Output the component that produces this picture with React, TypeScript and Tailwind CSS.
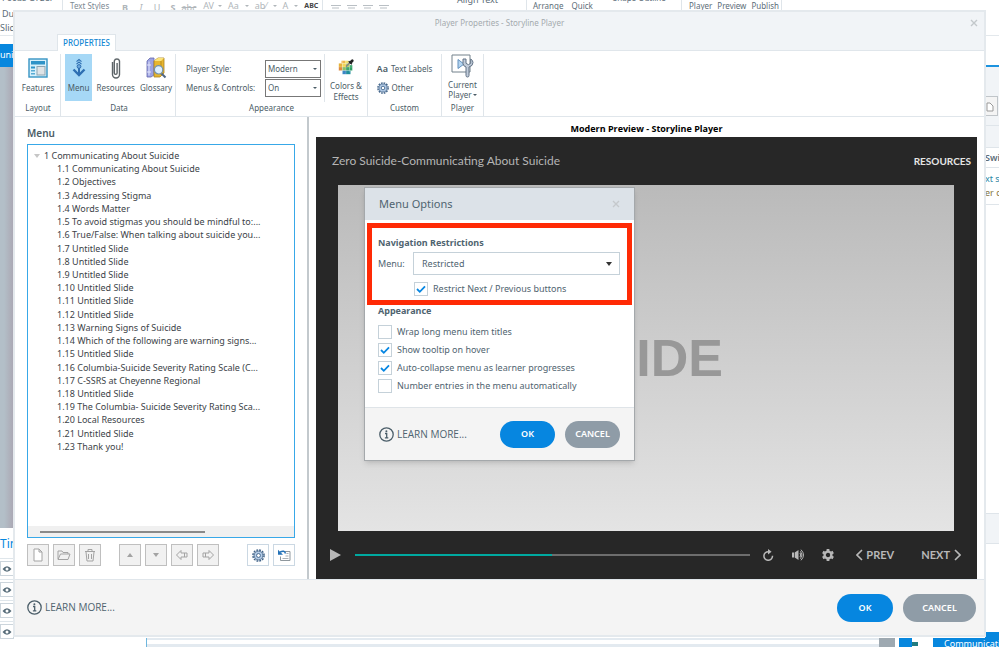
import type { ReactNode } from "react";

const menuItems = [
  "1.1 Communicating About Suicide",
  "1.2 Objectives",
  "1.3 Addressing Stigma",
  "1.4 Words Matter",
  "1.5 To avoid stigmas you should be mindful to:...",
  "1.6 True/False: When talking about suicide you...",
  "1.7 Untitled Slide",
  "1.8 Untitled Slide",
  "1.9 Untitled Slide",
  "1.10 Untitled Slide",
  "1.11 Untitled Slide",
  "1.12 Untitled Slide",
  "1.13 Warning Signs of Suicide",
  "1.14 Which of the following are warning signs...",
  "1.15 Untitled Slide",
  "1.16 Columbia-Suicide Severity Rating Scale (C...",
  "1.17 C-SSRS at Cheyenne Regional",
  "1.18 Untitled Slide",
  "1.19 The Columbia- Suicide Severity Rating Sca...",
  "1.20 Local Resources",
  "1.21 Untitled Slide",
  "1.23 Thank you!",
];

/* ---------- icons ---------- */

function GearIcon({ className }: { className: string }) {
  return (
    <svg viewBox="0 0 14 14" className={className} fill="none" stroke="#3f6288">
      <circle cx="7" cy="7" r="6" strokeWidth="1.6" strokeDasharray="2 1.14" />
      <circle cx="7" cy="7" r="4.7" fill="#b5cde8" strokeWidth="0.9" />
      <circle cx="7" cy="7" r="2.1" fill="#fff" strokeWidth="1" />
    </svg>
  );
}

function InfoIcon() {
  return (
    <svg viewBox="0 0 15 15" className="size-[15px]" fill="none" stroke="#4b5e69">
      <circle cx="7.5" cy="7.5" r="6.7" strokeWidth="1.3" />
      <path d="M6 6.5h1.7v4.2M5.9 10.8h3.4" strokeWidth="1.3" />
      <circle cx="7.4" cy="4.2" r="1" fill="#4b5e69" stroke="none" />
    </svg>
  );
}

function FeaturesIcon() {
  return (
    <svg viewBox="0 0 20 20" className="size-5">
      <rect x="1" y="1" width="18" height="18" fill="#d9f0fb" stroke="#3794c4" strokeWidth="1.4" />
      <rect x="3" y="3" width="14" height="3.5" fill="#2f93c8" />
      <rect x="3" y="8.5" width="4" height="2" fill="#2f93c8" />
      <rect x="3" y="12" width="4" height="1.5" fill="#58abd3" />
      <rect x="3" y="15" width="4" height="1.5" fill="#58abd3" />
      <rect x="9" y="8.5" width="8" height="8.5" fill="#dfe3e6" stroke="#8fa5b2" />
    </svg>
  );
}

function MenuIcon() {
  return (
    <svg viewBox="0 0 20 20" className="size-5" fill="none" stroke="#2e6fb2">
      <path d="M7.5 3.7 10 1.5l2.5 2.2M7.5 6.2 10 4l2.5 2.2" strokeWidth="1.1" />
      <circle cx="10" cy="8.5" r="1.9" fill="#6ea7dc" />
      <path d="M10 10v6" strokeWidth="2" />
      <path d="m4.5 11.5 5.500 5.500 5.500-5.500" strokeWidth="2.4" />
    </svg>
  );
}

function ClipIcon() {
  return (
    <svg viewBox="0 0 20 22" className="h-[22px] w-5" fill="none" stroke="#5d6468" strokeWidth="1.4">
      <path d="M6.5 5v12.5a3.5 3.5 0 0 0 7 0V4a2.7 2.7 0 0 0-5.2 0v12a1.4 1.4 0 0 0 2.8 0V6" />
    </svg>
  );
}

function GlossaryIcon() {
  return (
    <svg viewBox="0 0 22 22" className="size-[22px]">
      <path d="m2 4 3-3h4v17l-3 2H2z" fill="#9ca2e2" stroke="#6468ad" strokeWidth="0.8" />
      <path d="M4 4.5v14M2 8h4M2 15h4" stroke="#e3e5fb" />
      <path d="m9 4 4-3h6v15l-4 4H9z" fill="#e7b62f" stroke="#a88125" strokeWidth="0.8" />
      <path d="m9 4 4-3h6l-3 3z" fill="#fae37c" />
      <path d="M16 4v14" stroke="#b98b1f" />
      <path d="m16.5 16.5 4 4" stroke="#4f6584" strokeWidth="2" />
      <circle cx="13.6" cy="12.8" r="4.2" fill="#dcefff" stroke="#7290aa" strokeWidth="1.2" />
    </svg>
  );
}

function ColorsIcon() {
  return (
    <svg viewBox="0 0 20 20" className="size-5">
      <path d="M5 3h4v3H5z" fill="#f0b64a" />
      <path d="M9 3h4v3H9z" fill="#f4df69" />
      <path d="M2 6h4v4H2z" fill="#e6b33b" />
      <path d="M6 6h4v4H6z" fill="#f2d65a" />
      <path d="M10 6h4v4h-4z" fill="#b5cf5c" />
      <path d="M2 10h4v4H2z" fill="#de8a3f" />
      <path d="M6 10h4v4H6z" fill="#8fc06a" />
      <path d="M10 10h4v4h-4z" fill="#3fa66d" />
      <path d="M14 8h3v6h-3z" fill="#2c9f63" />
      <path d="M6 14h4v4H6z" fill="#3c86c5" />
      <path d="M10 14h5v4h-5z" fill="#1f8f9c" />
      <path d="M2 10h15M2 14h15M5 6h9M6 3v15M10 3v15M14 8v8" stroke="#fff" strokeWidth="0.4" opacity="0.6" />
      <path d="m10.5 9 4-4" stroke="#888" strokeWidth="1.8" strokeLinecap="round" />
      <path d="m13 3.5 3.5 3.5" stroke="#222" strokeWidth="1.5" />
      <path d="m15.3 4.7 1.7-1.7" stroke="#222" strokeWidth="3" strokeLinecap="round" />
    </svg>
  );
}

function WrenchIcon() {
  return (
    <svg viewBox="0 0 24 24" className="size-6">
      <path d="M2 1h18v17H2z" fill="#fff" stroke="#72818b" />
      <path d="M8 5.5v9l6-4.5z" fill="#b5d5f0" stroke="#6290bd" />
      <path d="M13 5v4.5q0 2.5 3 3.5v8.5q0 1.5 1.5 1.5t1.5-1.5V13q4-1 4-4.500-.2-2.500-2.300-3.500v4.300l-2.300 1.400-2.400-1.400V5z" fill="#c1ccda" stroke="#637386" />
    </svg>
  );
}

function EyeIcon() {
  return (
    <svg viewBox="0 0 10 8" className="h-2 w-2.5">
      <path d="M.5 4Q5-1.5 9.5 4 5 9.5.5 4z" fill="#566b78" />
      <circle cx="5" cy="4" r="1.5" fill="#fff" />
    </svg>
  );
}

function CloseIcon({ className }: { className: string }) {
  return (
    <svg viewBox="0 0 8 8" className={className} fill="none" stroke="currentColor" strokeWidth="1.4">
      <path d="m1 1 6 6M7 1 1 7" />
    </svg>
  );
}

function Caret() {
  return (
    <svg viewBox="0 0 4 2" className="h-0.5 w-1" fill="currentColor">
      <path d="M0 0h4L2 2z" />
    </svg>
  );
}

/* ---------- shared controls ---------- */

function Check({ label, checked }: { label: string; checked?: boolean }) {
  return (
    <label className="flex h-[18px] items-center gap-[5px] text-[9px] text-[#4f6470]">
      <span className="relative size-[14px]">
        <input type="checkbox" defaultChecked={checked} className="peer block size-[14px] appearance-none border border-[#c5d1d9] bg-white" />
        <svg viewBox="0 0 14 14" className="pointer-events-none absolute inset-0 hidden size-[14px] peer-checked:block" fill="none" stroke="#0686e2" strokeWidth="1.8">
          <path d="m3 7 2.8 2.8L11 4.4" />
        </svg>
      </span>
      {label}
    </label>
  );
}

function LearnMore() {
  return (
    <a href="#learn" className="flex items-center gap-[3px] font-['Open_Sans',sans-serif] text-[10px] text-[#4f6470]">
      <InfoIcon />
      LEARN MORE...
    </a>
  );
}

function RibbonSelect({ id, value }: { id: string; value: string }) {
  return (
    <span className="relative">
      <select id={id} className="block h-[18px] w-14 appearance-none border border-[#777] bg-white pl-0.5 text-[8px] text-[#4b5c66]">
        <option>{value}</option>
      </select>
      <span className="pointer-events-none absolute top-2 right-1">
        <Caret />
      </span>
    </span>
  );
}

function RibbonButton({ icon, label, active }: { icon: ReactNode; label: string; active?: boolean }) {
  return (
    <button className={`flex h-[47px] flex-col items-center pt-0.5 ${active ? "bg-[#a6d8f6] px-[3px]" : "px-px"}`}>
      <span className="flex h-6 items-center">{icon}</span>
      <span className="mt-0.5 leading-3">{label}</span>
    </button>
  );
}

function Group({ name, className, children }: { name: string; className: string; children: ReactNode }) {
  return (
    <div className={`flex flex-col border-r border-[#dfe5ea] ${className}`}>
      <div className="flex h-[48px] justify-center gap-[3px]">{children}</div>
      <div className="text-center leading-3">{name}</div>
    </div>
  );
}

function ToolButton({ children, label, enabled }: { children: ReactNode; label: string; enabled?: boolean }) {
  return (
    <button
      aria-label={label}
      className={`flex size-[22px] items-center justify-center border ${enabled ? "border-[#cbd8e3] bg-white" : "border-[#bfbfbf] bg-[#f1f1f1]"}`}
    >
      <svg viewBox="0 0 14 14" className="size-[14px]" fill="none" stroke="#a3a3a3">
        {children}
      </svg>
    </button>
  );
}

/* ---------- editor window behind the dialog ---------- */

function EditorBackdrop() {
  return (
    <div className="flex h-full flex-col text-[9px] text-[#5c6d78]">
      <div className="flex h-[36px] border-b border-[#e3e8ec] leading-3">
        <div className="w-[63px] flex-none border-r border-[#dfe5ea]">
          <div className="-mt-2 pl-0.5">Focus Order</div>
          <div className="mt-1 pl-0.5">Du</div>
          <div className="mt-0.5">Slid</div>
        </div>
        <div className="flex h-3 w-[260px] flex-none items-center border-r border-[#dfe5ea] pl-[7px] text-[#b0b6ba]">
          <span className="w-[47px] text-[8px] text-[#7d8992]">Text Styles</span>
          <span className="flex pt-1 text-center">
            <b className="w-4">B</b>
            <i className="w-4">I</i>
            <u className="w-4">U</u>
            <b className="w-4">S</b>
            <s className="w-4">abc</s>
          </span>
          <span className="w-[17px] text-right">AV</span>
          <span className="flex items-center gap-[6px] pl-1">
            <Caret />
            <span>Aa</span>
            <Caret />
            <span>ab⁄</span>
            <Caret />
            <span>A</span>
            <Caret />
            <b className="text-[7px] text-[#444]">ABC</b>
          </span>
        </div>
        <div className="flex h-3 w-[204px] flex-none items-center gap-[6px] border-r border-[#dfe5ea] pt-1 pl-2">
          {[0, 1, 2, 3].map((i) => (
            <svg key={i} viewBox="0 0 10 6" className="h-[6px] w-2.5" stroke="#b9bfc4">
              <path d="M0 .5h10M1 3h7M0 5.5h10" />
            </svg>
          ))}
          <span className="-mt-4 ml-[62px]">Align Text</span>
        </div>
        <div className="flex h-3 flex-1 gap-2 border-r border-[#dfe5ea] pl-[6px] text-[8px]">
          <span>Arrange</span>
          <span>Quick</span>
          <span className="-mt-2 pl-3">Shape Outline</span>
        </div>
        <div className="flex h-3 w-[100px] flex-none gap-[5px] border-r border-[#dfe5ea] pl-[7px] text-[8px]">
          <span>Player</span>
          <span>Preview</span>
          <span>Publish</span>
        </div>
        <div className="w-[217px] flex-none" />
      </div>

      <div className="flex min-h-0 flex-1 justify-between">
        <div className="-mb-1 flex w-[14px] flex-col overflow-hidden">
          <div className="mt-2 h-[23px] flex-none bg-[#0787de] leading-[22px] text-white">unic</div>
          <div className="flex-1 bg-linear-to-r from-[#b3bfc8] from-30% to-[#aaa6b2]" />
          <div className="h-[30px] flex-none text-xs leading-[32px] text-[#0787de]">Tin</div>
          {[0, 1, 2, 3].map((i) => (
            <div key={i} className="h-[21px] flex-none border-t border-[#dfe6eb] pt-0.5">
              <div className="flex h-[15px] items-center border border-[#ccd5dc] pl-px">
                <EyeIcon />
              </div>
            </div>
          ))}
        </div>
        <div className="flex w-[14px] flex-col overflow-hidden whitespace-nowrap">
          <div className="mt-[29px] h-[60px] flex-none border-t-2 border-[#1c93df] bg-[#f1f4f7] pt-[29px]">
            <button aria-label="Copy" className="flex h-5 w-[13px] items-center border border-[#c0c5c9] bg-[#f4f4f4]">
              <svg viewBox="0 0 8 12" className="h-3 w-2" fill="#fff" stroke="#999">
                <path d="M1 3h3l3 3v5H1z" />
              </svg>
            </button>
          </div>
          <div className="h-[23px] flex-none border-y border-[#dfe5ea] bg-[#f1f4f7]" />
          <div className="h-5 flex-none border-b border-[#dfe5ea] leading-5 font-semibold">Swip</div>
          <div className="h-[37px] flex-none border-b border-[#dfe5ea] pt-1 leading-[14px]">
            <div className="text-[#2b87a5]">xt sli</div>
            <div className="text-[#84763f]">er clic</div>
          </div>
          <div className="flex-1" />
          <div className="h-[31px] flex-none border-y border-[#dfe5ea] bg-[#f1f4f7]" />
          <div className="h-[88px] flex-none" />
          <div className="h-[6px] flex-none bg-[#0787de]" />
        </div>
      </div>

      <div className="flex h-[9px] overflow-hidden">
        <div className="w-[146px]" />
        <div className="flex flex-1 flex-col gap-[3px] border-l border-[#6fb7de] bg-[#e3eaf0] pt-0.5">
          <div className="h-1 bg-white" />
        </div>
        <div className="w-4 bg-[#9ea9b1]" />
        <div className="flex w-[104px] gap-[11px] border-l-4 border-white bg-[#0787de] pl-[13px] text-white">
          <span className="h-[9px] w-[21px] flex-none bg-white pt-1">
            <span className="block h-1 w-1.5 bg-[#227c80]" />
          </span>
          <span className="leading-3">Communicating</span>
        </div>
      </div>
    </div>
  );
}

/* ---------- dialog parts ---------- */

function Ribbon() {
  return (
    <div className="flex h-[66px] flex-none border-b border-[#e0e6eb] pt-[3px] text-[8px] text-[#4b5c66]">
      <Group name="Layout" className="w-[46px] pl-px">
        <RibbonButton icon={<FeaturesIcon />} label="Features" />
      </Group>
      <Group name="Data" className="w-[115px] pl-0.5">
        <RibbonButton icon={<MenuIcon />} label="Menu" active />
        <RibbonButton icon={<ClipIcon />} label="Resources" />
        <RibbonButton icon={<GlossaryIcon />} label="Glossary" />
      </Group>
      <Group name="Appearance" className="w-[192px]">
        <div className="flex flex-1 flex-col gap-px border-r border-[#dfe5ea] pt-[6px] pr-[3px] pl-2.5">
          <div className="flex items-center justify-between">
            <label htmlFor="style">Player Style:</label>
            <RibbonSelect id="style" value="Modern" />
          </div>
          <div className="flex items-center justify-between">
            <label htmlFor="controls">Menus &amp; Controls:</label>
            <RibbonSelect id="controls" value="On" />
          </div>
        </div>
        <button className="flex w-[39px] flex-col items-center pt-1 pr-[3px] leading-[11px]">
          <ColorsIcon />
          <span className="mt-1 whitespace-nowrap">Colors &amp;</span>
          <span>Effects</span>
        </button>
      </Group>
      <Group name="Custom" className="w-[74px]">
        <div className="flex flex-col gap-[5px] pt-2">
          <button className="flex h-[14px] items-center gap-[3px]">
            <span className="text-[9px] font-semibold">Aa</span>Text Labels
          </button>
          <button className="flex h-[14px] items-center gap-[3px]">
            <GearIcon className="size-3" />
            Other
          </button>
        </div>
      </Group>
      <Group name="Player" className="w-[42px]">
        <button className="flex flex-col items-center leading-[10px]">
          <WrenchIcon />
          <span className="mt-0.5">Current</span>
          <span className="flex items-center gap-px">
            Player
            <Caret />
          </span>
        </button>
      </Group>
    </div>
  );
}

function MenuPanel() {
  return (
    <div className="flex w-[294px] flex-none flex-col border-r-2 border-[#c3c9cd] pt-[9px] pr-3 pb-[13px] pl-3">
      <h2 className="pb-1 text-[10px] leading-[14px] font-semibold text-[#4b5c66]">Menu</h2>
      <div className="flex flex-1 flex-col justify-between border border-[#38a8e8] text-[9px] text-[#3c4348]">
        <ul className="grid h-[308px] content-between pt-1 pl-[29px] leading-[13px] whitespace-nowrap">
          <li className="-ml-[23px] flex items-center gap-1">
            <svg viewBox="0 0 6 4" className="h-1 w-1.5">
              <path d="M0 0h6L3 4z" fill="#c6c6c6" />
            </svg>
            1 Communicating About Suicide
          </li>
          {menuItems.map((item) => (
            <li key={item}>{item}</li>
          ))}
        </ul>
        <div className="flex h-[11px] items-center bg-[#f0f0f0] pl-3">
          <div className="h-0.5 w-[165px] bg-[#8a8a8a]" />
        </div>
      </div>
      <div className="mt-[6px] flex gap-1">
        <ToolButton label="New">
          <path d="M3 1h5l3 3v9H3zM8 1v3h3" fill="#fff" />
        </ToolButton>
        <ToolButton label="Open">
          <path d="M1 11V3h4l1 1.5h5V6M1 11.5 3.5 6H13l-2 5.5z" />
        </ToolButton>
        <ToolButton label="Delete">
          <path d="M2 3.5h10M5 3V1.5h4V3M3 4l1 9h6l1-9M5.5 6v5M8.5 6v5" />
        </ToolButton>
        <span className="w-2.5" />
        <ToolButton label="Move up">
          <path d="m4 9 3-4 3 4z" fill="#a3a3a3" stroke="none" />
        </ToolButton>
        <ToolButton label="Move down">
          <path d="m4 5 3 4 3-4z" fill="#a3a3a3" stroke="none" />
        </ToolButton>
        <ToolButton label="Promote">
          <path d="M1.5 7 6 2.5V5h6v4H6v2.5zM9.500 5v4" />
        </ToolButton>
        <ToolButton label="Demote">
          <path d="M12.5 7 8 2.5V5H2v4h6v2.5zM4.500 5v4" />
        </ToolButton>
        <span className="flex-1" />
        <button aria-label="Options" className="flex size-[22px] items-center justify-center border border-[#cbd8e3]">
          <GearIcon className="size-[13px]" />
        </button>
        <ToolButton label="Reset" enabled>
          <path d="M7.5 3.5H13v9H3.5V8.5" stroke="#8e979d" />
          <path d="M5.5 10.5h6M8.5 8h3M9.5 5.5h2" stroke="#a9b0b5" />
          <path d="M8.5 5.5Q7.5 1.8 3.2 4" stroke="#2372b8" strokeWidth="1.5" />
          <path d="M1 1.8v5h5z" fill="#2372b8" stroke="none" />
        </ToolButton>
      </div>
    </div>
  );
}

function MenuOptions() {
  return (
    <div className="absolute top-0.5 left-[26px] w-[271px] border border-[#a4a8ab] bg-white text-[#4f6470] shadow-md">
      <div className="flex h-8 items-center justify-between bg-[#dce2e8] px-[14px]">
        <h3 className="text-[11px]">Menu Options</h3>
        <button aria-label="Close" className="text-[#c5c9cc]">
          <CloseIcon className="size-2" />
        </button>
      </div>

      <div className="mx-0.5 mt-[3px] border-[5px] border-[#ff2a05] pt-2 pr-[7px] pb-0.5 pl-[6px] text-[9px]">
        <h4 className="leading-[14px] font-bold">Navigation Restrictions</h4>
        <div className="mt-0.5 flex items-center justify-between">
          <label htmlFor="restrict">Menu:</label>
          <span className="relative">
            <select id="restrict" className="block h-[23px] w-[207px] appearance-none border border-[#c5d1d9] bg-white pl-2 text-[9px]">
              <option>Restricted</option>
            </select>
            <svg viewBox="0 0 6 4" className="pointer-events-none absolute top-2.5 right-2 h-1 w-1.5">
              <path d="M0 0h6L3 4z" fill="#333" />
            </svg>
          </span>
        </div>
        <div className="mt-[5px] pl-9">
          <Check label="Restrict Next / Previous buttons" checked />
        </div>
      </div>

      <div className="px-[13px] pb-3 text-[9px]">
        <h4 className="mb-[6px] leading-3 font-bold">Appearance</h4>
        <Check label="Wrap long menu item titles" />
        <Check label="Show tooltip on hover" checked />
        <Check label="Auto-collapse menu as learner progresses" checked />
        <Check label="Number entries in the menu automatically" />
      </div>

      <div className="flex h-[53px] items-center border-t border-[#dfe4e8] bg-[#f4f4f4] px-[14px]">
        <LearnMore />
        <span className="flex-1" />
        <button className="h-[27px] w-[55px] rounded-full bg-[#0686e0] text-[9px] font-semibold text-white">OK</button>
        <button className="ml-2.5 h-[27px] w-[55px] rounded-full bg-[#8f9ca7] text-[9px] font-semibold text-white">CANCEL</button>
      </div>
    </div>
  );
}

function Preview() {
  return (
    <div className="flex flex-1 flex-col px-[7px]">
      <h2 className="h-5 flex-none pt-1 text-center font-['Open_Sans',sans-serif] text-[9px] leading-4 font-bold text-black">
        Modern Preview - Storyline Player
      </h2>
      <div className="flex flex-1 flex-col bg-[#272727] font-[Lato,sans-serif]">
        <div className="flex h-12 items-center justify-between pr-[6px] pl-4">
          <span className="text-xs text-[#b5b5b5]">Zero Suicide-Communicating About Suicide</span>
          <span className="text-[10px] font-bold text-[#e5e5e5]">RESOURCES</span>
        </div>
        <div className="relative mr-[23px] ml-[22px] flex flex-1 items-center justify-end bg-linear-to-b from-[#bababa] to-[#e4e4e4] pr-[231px] font-['Noto_Sans',sans-serif]">
          <span className="font-['Liberation_Sans',Arial,sans-serif] text-[52px] leading-none font-bold text-[#989898]">IDE</span>
          <MenuOptions />
        </div>
        <div className="flex h-12 items-center pr-4 pl-[14px] text-[#b8b8b8]">
          <button aria-label="Play">
            <svg viewBox="0 0 11 12" className="h-3 w-[11px]">
              <path d="M0 0v12l11-6z" fill="currentColor" />
            </svg>
          </button>
          <input
            type="range"
            aria-label="Seek"
            className="mr-3 ml-[14px] h-0.5 min-w-0 flex-1 appearance-none bg-linear-to-r from-[#00a9a0] from-50% to-[#6d6d6d] to-50% [&::-webkit-slider-thumb]:size-0 [&::-webkit-slider-thumb]:appearance-none"
          />
          <button aria-label="Replay">
            <svg viewBox="0 0 12 12" className="size-3" fill="none" stroke="currentColor" strokeWidth="1.5">
              <path d="M10.5 6.8A4.3 4.3 0 1 1 6.5 2.700" />
              <path d="M6 0v5.4l3.6-2.7z" fill="currentColor" stroke="none" />
            </svg>
          </button>
          <button aria-label="Volume" className="ml-[18px]">
            <svg viewBox="0 0 13 12" className="h-3 w-[13px]" fill="none" stroke="currentColor">
              <path d="M0 3.5h2v5H0zM2.7 3.5 6.5 1v10L2.7 8.5z" fill="currentColor" stroke="none" />
              <path d="M8 4q1.5 2 0 4M8.5 2.3q3 3.7 0 7.4M9 .7q5 5.300 0 10.600" />
            </svg>
          </button>
          <button aria-label="Settings" className="ml-[17px]">
            <svg viewBox="0 0 12 12" className="size-3" fill="none" stroke="currentColor">
              <circle cx="6" cy="6" r="3.4" strokeWidth="2.4" />
              <path d="M6 0v2M6 10v2M.8 3l1.7 1M9.5 8l1.7 1M11.2 3 9.5 4M2.5 8 .8 9" strokeWidth="2.8" />
            </svg>
          </button>
          <button className="ml-[22px] flex items-center gap-[3px] text-[11px] font-bold">
            <svg viewBox="0 0 7 12" className="h-3 w-[7px]" fill="none" stroke="currentColor" strokeWidth="1.6">
              <path d="M6 1 1 6l5 5" />
            </svg>
            PREV
          </button>
          <button className="ml-[27px] flex items-center gap-1 text-[11px] font-bold">
            NEXT
            <svg viewBox="0 0 7 12" className="h-3 w-[7px]" fill="none" stroke="currentColor" strokeWidth="1.6">
              <path d="m1 1 5 5-5 5" />
            </svg>
          </button>
        </div>
      </div>
    </div>
  );
}

export default function App() {
  return (
    <div className="relative h-screen overflow-hidden bg-white font-['Noto_Sans',sans-serif]">
      <EditorBackdrop />
      <div className="absolute inset-x-[13px] top-2.5 bottom-2.5 flex flex-col border-2 border-[#e4e9ed] bg-white">
        <div className="flex h-[39px] flex-none flex-col justify-between border-b border-[#e0e6eb] bg-[#f1f4f7]">
          <div className="flex h-[22px] items-center justify-between pr-[6px] pl-[14px] text-[8px] text-[#a4aaae]">
            <span />
            <h1>Player Properties - Storyline Player</h1>
            <button aria-label="Close dialog" className="text-[#c3c8cb]">
              <CloseIcon className="size-2" />
            </button>
          </div>
          <div className="-mb-px ml-[42px] h-[17px] w-[59px] border border-b-0 border-[#dfe5ea] bg-white text-center text-[8px] leading-4 font-medium text-[#1487d4]">
            PROPERTIES
          </div>
        </div>
        <Ribbon />
        <div className="flex min-h-0 flex-1">
          <MenuPanel />
          <Preview />
        </div>
        <div className="flex h-[56px] flex-none items-center border-t border-[#e0e6eb] bg-[#f4f4f4] pr-2 pl-3">
          <LearnMore />
          <span className="flex-1" />
          <button className="h-7 w-14 rounded-full bg-[#0686e0] text-[9px] font-semibold text-white">OK</button>
          <button className="ml-2.5 h-7 w-[73px] rounded-full bg-[#8f9ca7] text-[9px] font-semibold text-white">CANCEL</button>
        </div>
      </div>
    </div>
  );
}
